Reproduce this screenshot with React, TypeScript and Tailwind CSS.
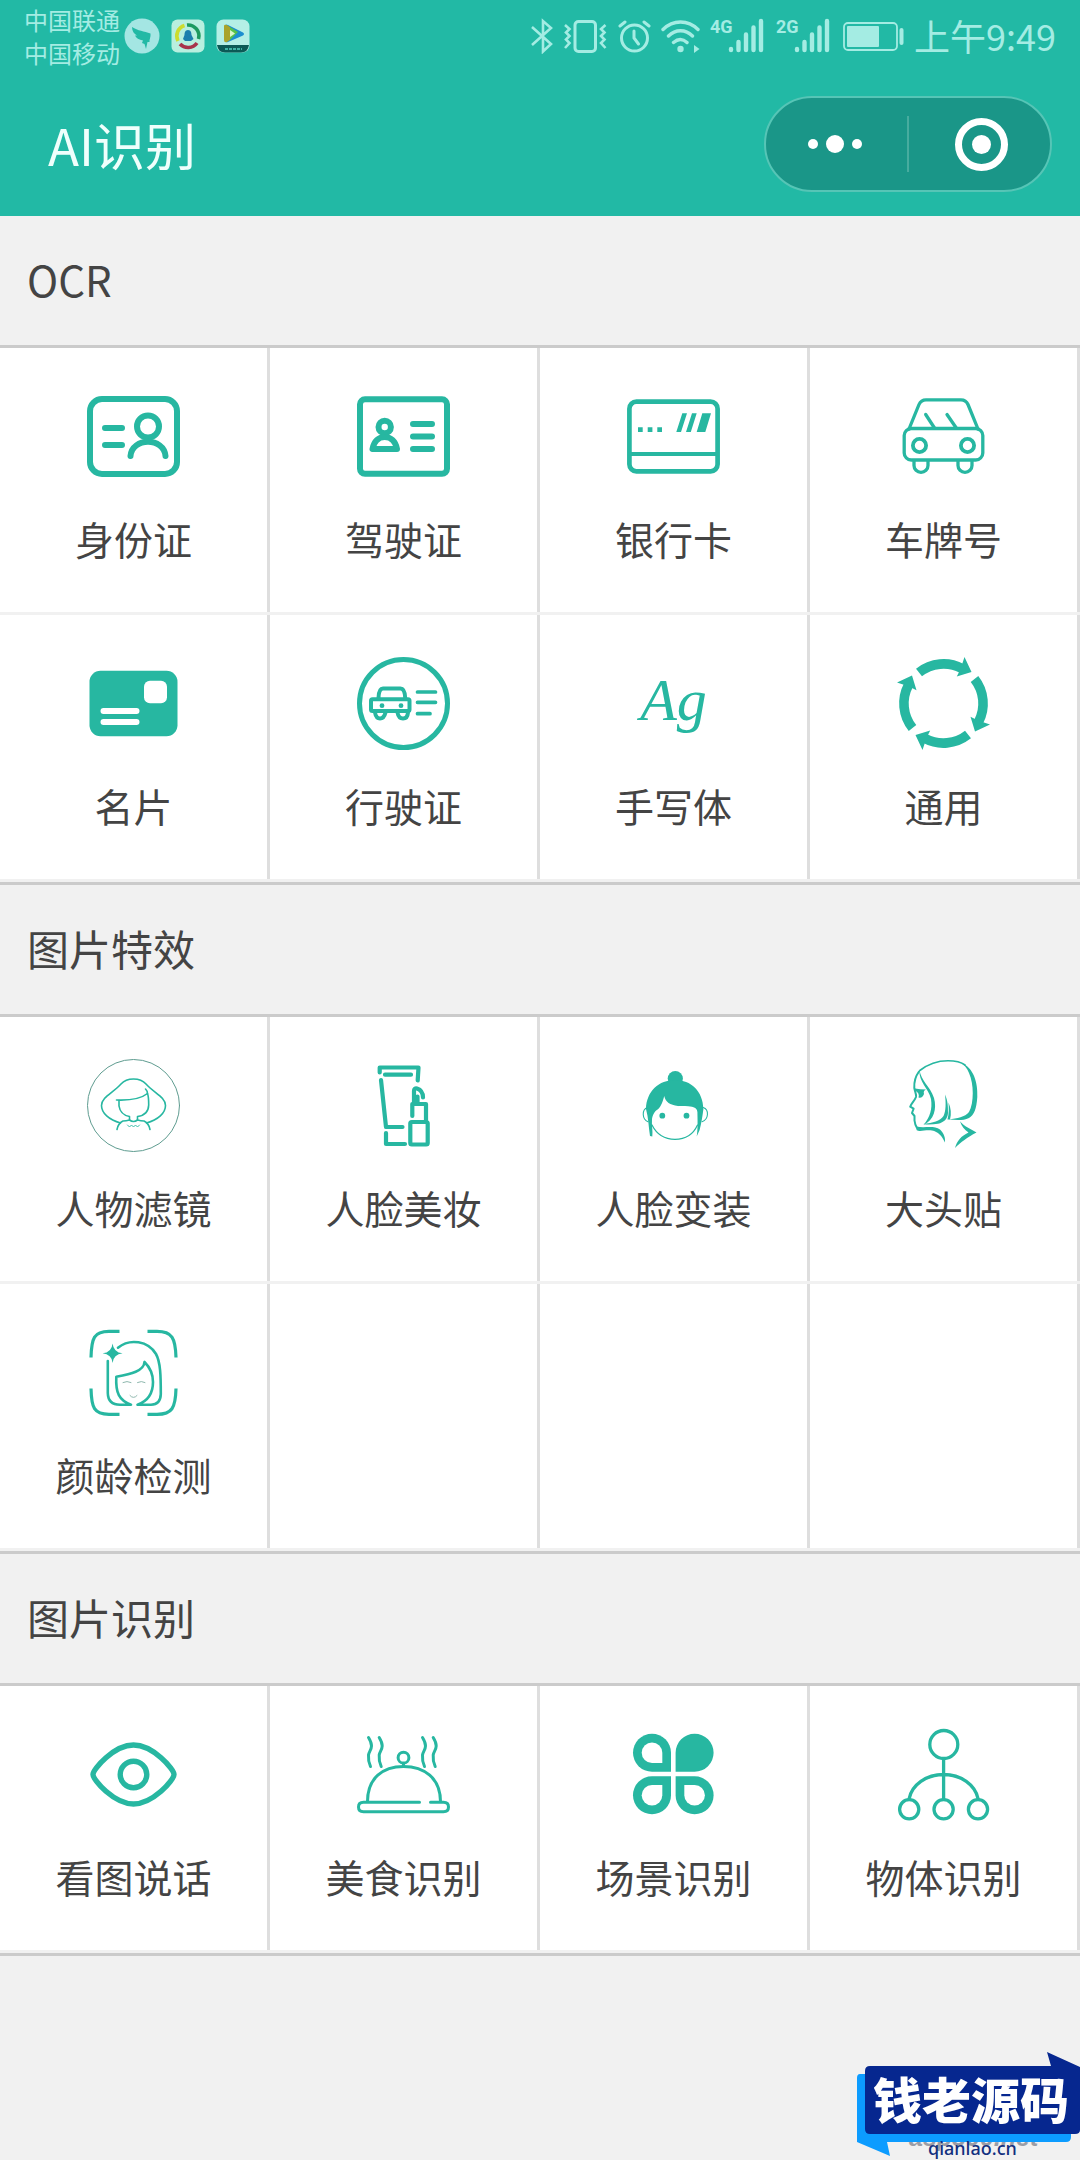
import React from 'react'

type Item = { label: string; icon: React.ReactNode }
type Section = { title: string; items: Item[] }

function Icon({ children }: { children: React.ReactNode }) {
  return (
    <svg
      viewBox="0 0 93 93"
      className="h-[93px] w-[93px] text-[#27b7a1]"
      fill="none"
      stroke="currentColor"
      strokeLinecap="round"
      strokeLinejoin="round"
      aria-hidden="true"
    >
      {children}
    </svg>
  )
}

/* OCR */

const IdCardIcon = () => (
  <Icon>
    <g strokeWidth="6">
      <rect x="3" y="9" width="87" height="75" rx="12" />
      <path d="M18 38H35M18 55H35" />
      <circle cx="61" cy="36.5" r="11" />
      <path d="M43.5 66C45 47 77 47 78.5 66" />
    </g>
  </Icon>
)

const DriverLicenseIcon = () => (
  <Icon>
    <g strokeWidth="6">
      <rect x="3" y="9.3" width="87" height="74.5" rx="5" />
      <circle cx="27.7" cy="37" r="6.2" />
      <path d="M15.5 59H40C38.5 51 33.5 47 27.7 47S17 51 15.5 59Z" />
      <path d="M56 34H75M56 46.5H75M56 59H75" />
    </g>
  </Icon>
)

const BankCardIcon = () => (
  <Icon>
    <rect x="2.4" y="11.7" width="88.2" height="69.6" rx="7" strokeWidth="4.7" />
    <path d="M3 64H90" strokeWidth="4" />
    <g fill="currentColor" stroke="none">
      <path d="M11 37.3h4.7v4.7h-4.7zM20.7 37.3h4.7v4.7h-4.7zM30.3 37.3h4.7v4.7h-4.7z" />
      <path d="M55.3 23.3H60L54 42H49.3zM65 23.3H69.7L63.8 42H59zM75.3 23.3H84L78.3 42H69.7z" />
    </g>
  </Icon>
)

const CarIcon = () => (
  <Icon>
    <g strokeWidth="3.3">
      <rect x="7.2" y="38.5" width="78.6" height="31.5" rx="7" />
      <path d="M12 39L22 14.5Q24 9.8 29 9.8H64Q69 9.8 71 14.5L81 39" />
      <path d="M28.7 24.5L37.5 38M50 24.5L59.3 38" />
      <circle cx="22.5" cy="55.5" r="6.6" strokeWidth="3.8" />
      <circle cx="70.5" cy="55.5" r="6.6" strokeWidth="3.8" />
      <path d="M17 71V75.5A7 6.8 0 0 0 31 75.5V71M61 71V75.5A7 6.8 0 0 0 75 75.5V71" />
    </g>
  </Icon>
)

const BusinessCardIcon = () => (
  <Icon>
    <rect x="2.5" y="13.7" width="88" height="65.6" rx="11" fill="currentColor" stroke="none" />
    <rect x="57" y="23.7" width="23" height="22.6" rx="6" fill="#fff" stroke="none" />
    <path d="M16.5 54H49.5M16.5 65H49.5" stroke="#fff" strokeWidth="6" />
  </Icon>
)

const VehicleLicenseIcon = () => (
  <Icon>
    <circle cx="46.5" cy="46.5" r="44" strokeWidth="5" />
    <g strokeWidth="4">
      <rect x="14" y="42.3" width="38.5" height="11.7" rx="1.5" />
      <path d="M21.5 41Q21.8 31.5 26 31.5H43.5Q47.8 31.5 48.2 41" />
      <path d="M18 55.5Q19 61.5 23 61.5T28.5 55.5M40.5 55.5Q41.5 61.5 46 61.5T51 55.5" />
      <path d="M60.5 35H78.5M60.5 45.3H78.5M60.5 56.7H73" strokeWidth="3.7" />
    </g>
    <circle cx="25" cy="48.7" r="2.4" fill="currentColor" stroke="none" />
    <circle cx="44" cy="48.7" r="2.4" fill="currentColor" stroke="none" />
  </Icon>
)

const HandwritingIcon = () => (
  <span className="flex h-[93px] w-[93px] items-center justify-center pb-2 font-['Liberation_Serif',serif] text-[60px] leading-none text-[#27b7a1] italic">
    Ag
  </span>
)

const GeneralIcon = () => (
  <Icon>
    {[0, 90, 180, 270].map((deg) => (
      <g key={deg} transform={`rotate(${deg} 46.5 46.5)`}>
        <path d="M22 15.5A39.5 39.5 0 0 1 65 11.5" strokeWidth="9.6" strokeLinecap="butt" />
        <path d="M67.5 0L74.5 15L59.8 19.5L63.5 12Z" fill="currentColor" stroke="none" />
      </g>
    ))}
  </Icon>
)

/* Photo effects */

const PortraitFilterIcon = () => (
  <Icon>
    <circle cx="46.5" cy="46.5" r="46" strokeWidth="1" stroke="#5f9c90" />
    <g strokeWidth="1.6">
      <path d="M33.5 64C22 61 14.5 54 14.5 46.5C14.5 38 26 34 34 25C38 20.5 42 20 46.5 20S55 20.5 59 25C67 34 78.5 38 78.5 46.5C78.5 54 71 61 59.5 64" />
      <path d="M29.5 41C42 41.5 53 40.5 60.5 34.5C60.5 32.5 59.5 31 58.5 30" />
      <path d="M60.5 34.5C61.5 37 61.7 40 61.7 46C61.5 53 57.5 56.5 50.5 57.5V61Q54 62 57 62Q62 64.5 63 70.5" />
      <path d="M32 41.5V47C33 53.5 37 56.5 42.5 57.5V61Q39 62 36 62Q31 64.5 30 70.5" />
      <path d="M42.5 61Q46.5 64 50.5 61" />
      <path d="M40.5 66L42.5 68L44.5 66L46.5 68L48.5 66L50.5 68L52.5 66" strokeWidth="0.9" />
    </g>
  </Icon>
)

const MakeupIcon = () => (
  <Icon>
    <g strokeWidth="4.2">
      <path d="M22.7 13.5V8.5H61.5L60.7 21.5M28 15.7H54" />
      <path d="M24 21L29 68H45.5M29 74V85H48" />
      <rect x="53.3" y="63" width="17.4" height="22.5" rx="1.5" />
      <path d="M55.3 57V45H69V61" />
      <path d="M57 44V32Q57 29 60 29.5Q66 31.5 66 38.5M60.5 37.5V44" />
    </g>
  </Icon>
)

const DressUpIcon = () => (
  <Icon>
    <g fill="currentColor" stroke="none">
      <circle cx="48.3" cy="19.5" r="7.6" />
      <path d="M19 50C19.5 32 32 21 48 21S76 32 76.4 50C75.5 57 74.5 64 72.6 71L69.7 77.5C71 70 70.5 60 70.4 53Q70 48.5 65 47.7C60 47 55 47.5 51 47C43 46 38.5 43 37.2 37C36 42 34 47.5 31.5 49.7C28 52 26 54.5 25 60C24.5 66 26 72 25.3 77.5L23 77C21.5 68 21.5 59 19 50Z" />
      <circle cx="35.3" cy="56.7" r="2.9" />
      <circle cx="59.5" cy="56.7" r="2.9" />
    </g>
    <path d="M25 66C30 76 39 80.3 48 80.3S66 76 70.5 66" strokeWidth="1.2" />
    <path d="M20.5 48.5C14.5 50.5 15 60.5 21 62.7M76.2 48.5C82.3 50.5 81.8 60.5 75 62.7" strokeWidth="1.1" />
  </Icon>
)

const StickerIcon = () => (
  <Icon>
    <path d="M22.8 11.5C31 5 41 1.7 51 1.7C58 1.7 64 3 68 6" strokeWidth="1.6" />
    <g fill="currentColor" stroke="none">
      <path d="M64 3.5C77 9 81 24 80.3 38C79.5 50 77 56 72 59C66 62 58 61 52 60.5C60 59.5 68 58 72 53C77 44 77 25 72 14C70 9 67 6 64 3.5Z" />
      <path d="M22.5 11C24 22 33 27 37 39C40 50 37 61 26.5 66C33 58 35.5 50 34 40C31.5 29 21.5 23 22.5 11Z" />
      <path d="M26.3 65C36 64 43 62 46.5 57C49 52 49 44 48 35.5C51 42 51 48 51 54C50.5 60 47 63.5 41 64.7C36 65.5 31 66 26.3 65Z" />
      <path d="M51.5 43.5C54 49 54.5 55 53 60.5L50.5 60.5C52 55 52 49 51.5 43.5Z" />
      <path d="M18 29.5Q23 30.5 29 30.5Q26 31.5 27 35Q25.5 39.5 21.5 38.5Q23 34 18 31.5Z" />
      <path d="M19.5 67.5C27 69.5 37 66 43 70.5C47 74 48.5 79 48 83.5C45 77 41 72.5 35 71.5C28 70.5 23 73.5 19.5 71Z" />
      <path d="M63 62.3C67 67.5 74 70 79.5 73.5C70 78.5 64 83 58 89C60 82 64 77 71.5 73.5C67.5 70.5 64.5 67.5 63 62.3Z" />
    </g>
    <path d="M22 12.5C18 18 17 24 17.3 29C18 33 19.5 35 19 38C17.5 42 14 44.5 13.2 47.7L16.6 49.7L15 54L17.5 57V61.5Q18 66 20 69" strokeWidth="2" />
  </Icon>
)

const FaceAgeIcon = () => (
  <Icon>
    <path
      d="M4 31.5C4.5 12 7 5.3 22 5.3H32.5M60.5 5.3H70C85 5.3 88.5 12 89 31.5M89 62.5C88.5 82 85 88.3 70 88.3H60.5M32.5 88.3H22C7 88.3 4.5 82 4 62.5"
      strokeWidth="3.2"
      strokeLinecap="butt"
    />
    <path d="M25.6 17.5Q26.5 26.5 35.6 27.3Q26.5 28.2 25.6 37Q24.7 28.2 15.6 27.3Q24.7 26.5 25.6 17.5Z" fill="currentColor" stroke="none" />
    <path
      d="M31 21.7C43 12 61 15 69 28C73.5 36 73.8 50 73.8 68Q73.5 78.7 64 78.7H50.5C61 75 66 68 66 56C66 47 62.5 41 57.5 36C57 45 44 48 29.3 50.7C28.5 67 32 74 44 78.7H33Q21 78.7 20.8 67V35"
      strokeWidth="2.6"
    />
    <path d="M36 56.5Q40 54.5 44 56.5M50.5 56.5Q54.5 54.5 58 56.5M43 69.5Q46.5 73.5 50 69.5" strokeWidth="1" stroke="#8fb8ae" />
  </Icon>
)

/* Photo recognition */

const EyeIcon = () => (
  <Icon>
    <g strokeWidth="5.4">
      <path d="M6 46.5C6 41 27 17 46.5 17S87 41 87 46.5S66 76 46.5 76S6 52 6 46.5Z" />
      <circle cx="46.5" cy="46.5" r="13.3" />
    </g>
  </Icon>
)

const FoodIcon = () => (
  <Icon>
    <g strokeWidth="3">
      <path d="M10.5 73.5C10.5 50 26 38.5 46.5 38.5S83.5 50 83.5 73.5" />
      <circle cx="46.5" cy="29.7" r="5.4" />
      <path d="M46.5 35.5V38.5M62.5 74.3H6.500Q1.500 74.3 1.500 79T6.500 83.700H86.500Q91.500 83.700 91.500 79T86.500 74.300H73.500" />
      <path d="M11.5 9.5C18 20 12 22 11.5 27C11 32 12 35 13.5 38.5" />
      <path d="M22.2 9.5C28.7 20 22.7 22 22.2 27C21.7 32 22.7 35 24.2 38.5" />
      <path d="M65.5 9.5C72 20 66 22 65.5 27C65 32 66 35 67.5 38.5" />
      <path d="M76.2 9.5C82.7 20 76.7 22 76.2 27C75.7 32 76.7 35 78.2 38.5" />
    </g>
  </Icon>
)

const SceneIcon = () => (
  <Icon>
    <g fill="currentColor" stroke="none">
      <path d="M44 43.7H25A19 19 0 1 1 44 24.7Z" />
      <path d="M48.6 43.7V24.7A19 19 0 1 1 67.6 43.7Z" />
      <path d="M44 48.3V67.3A19 19 0 1 1 25 48.3Z" />
      <path d="M48.6 48.3H67.6A19 19 0 1 1 48.6 67.3Z" />
    </g>
    <g fill="#fff" stroke="none">
      <path d="M35.3 35H25A10.3 10.3 0 1 1 35.3 24.7Z" />
      <path d="M35.3 57V67.3A10.3 10.3 0 1 1 25 57Z" />
      <path d="M57.3 57H67.6A10.3 10.3 0 1 1 57.3 67.3Z" />
    </g>
  </Icon>
)

const ObjectIcon = () => (
  <Icon>
    <g strokeWidth="3.3">
      <circle cx="46.8" cy="16.5" r="14" />
      <path d="M46.6 31V71M12.2 70.5C15 57 29 46.5 46.6 46.5S78 57 81 70.5" />
      <circle cx="12.2" cy="81.3" r="9.6" />
      <circle cx="46.6" cy="81.3" r="9.6" />
      <circle cx="81" cy="81.3" r="9.6" />
    </g>
  </Icon>
)

const sections: Section[] = [
  {
    title: 'OCR',
    items: [
      { label: '身份证', icon: <IdCardIcon /> },
      { label: '驾驶证', icon: <DriverLicenseIcon /> },
      { label: '银行卡', icon: <BankCardIcon /> },
      { label: '车牌号', icon: <CarIcon /> },
      { label: '名片', icon: <BusinessCardIcon /> },
      { label: '行驶证', icon: <VehicleLicenseIcon /> },
      { label: '手写体', icon: <HandwritingIcon /> },
      { label: '通用', icon: <GeneralIcon /> },
    ],
  },
  {
    title: '图片特效',
    items: [
      { label: '人物滤镜', icon: <PortraitFilterIcon /> },
      { label: '人脸美妆', icon: <MakeupIcon /> },
      { label: '人脸变装', icon: <DressUpIcon /> },
      { label: '大头贴', icon: <StickerIcon /> },
      { label: '颜龄检测', icon: <FaceAgeIcon /> },
    ],
  },
  {
    title: '图片识别',
    items: [
      { label: '看图说话', icon: <EyeIcon /> },
      { label: '美食识别', icon: <FoodIcon /> },
      { label: '场景识别', icon: <SceneIcon /> },
      { label: '物体识别', icon: <ObjectIcon /> },
    ],
  },
]

function Signal({ type }: { type: string }) {
  return (
    <span className="flex h-9 w-14 items-start">
      <span className="w-[18px] font-['Liberation_Sans_Narrow','Roboto',sans-serif] text-[18px] leading-[18px] font-bold">
        {type}
      </span>
      <svg viewBox="0 0 36 36" className="h-9 w-9" stroke="currentColor" strokeWidth="4.4" strokeLinecap="round" aria-hidden="true">
        <path d="M3 31V32M10.5 24V32M18 16.5V32M25.5 9.5V32M33 3V32" />
      </svg>
    </span>
  )
}

function StatusBar() {
  return (
    <div className="flex h-[72px] items-center justify-between px-6 text-[#a4ece3]">
      <div className="flex items-center">
        <div className="mr-1 text-[24px] leading-[33px]">
          <p>中国联通</p>
          <p>中国移动</p>
        </div>
        <div className="flex items-center gap-[11px]">
          <svg viewBox="0 0 36 36" className="h-9 w-9" aria-hidden="true">
            <circle cx="18" cy="18" r="17.5" fill="#a4e6e3" />
            <path d="M8 9C14 13 20 13 26.5 15.5C27 19 25 22 25.500 24H23.500L22 31L20.500 26L18 25L19 22.500C15 22 12 20 11 17.500H13C10 16 8 13 8 9Z" fill="#22b9a5" />
          </svg>
          <svg viewBox="0 0 34 34" className="h-[34px] w-[34px]" aria-hidden="true">
            <rect x="0.5" y="0.5" width="33" height="33" rx="6" fill="#b8efdf" />
            <g fill="none" strokeWidth="3.6">
              <path d="M7 22A11 11 0 0 1 13.5 6.500" stroke="#cddc2e" />
              <path d="M16 6A11 11 0 0 1 27.500 20" stroke="#1c9a5f" />
              <path d="M26 24A11 11 0 0 1 9 25" stroke="#a8324a" />
            </g>
            <path d="M17 11C20 11 20.5 14 20.5 16L22.5 20L20 22H14L12 20L13.5 16C13.5 14 14 11 17 11Z" fill="#1b7fae" />
          </svg>
          <svg viewBox="0 0 34 34" className="h-[34px] w-[34px]" aria-hidden="true">
            <rect x="0.5" y="0.5" width="33" height="33" rx="7" fill="#b4efe6" />
            <path d="M1 26H33Q32 33.5 25 33.5H9Q2 33.5 1 26Z" fill="#0b5a56" />
            <path d="M9 7Q9 4.5 12 6L27 13.5Q29 15 27 16.5L12 23Q9 24 9 21Z" fill="#1c8fd0" />
            <path d="M8 7Q8 5 11 6L14 8V21L11 23Q8 24 8 21Z" fill="#a9a32c" />
            <path d="M14 8L22 13L14 21Z" fill="#57c14b" />
            <path d="M14 11L19 14.5L14 18Z" fill="#d9f7c9" />
            <path d="M9 30H26" stroke="#3fb3a5" strokeWidth="2" strokeDasharray="3 1" />
          </svg>
        </div>
      </div>
      <div className="flex items-center gap-[10px]">
        <svg viewBox="0 0 23 36" className="h-9 w-[23px]" fill="none" stroke="currentColor" strokeWidth="2.6" aria-hidden="true">
          <path d="M1 9L20 26L12 33.5V3L20 10L1 27" />
        </svg>
        <svg viewBox="0 0 44 36" className="h-9 w-11" fill="none" stroke="currentColor" strokeWidth="3" aria-hidden="true">
          <rect x="11" y="3.5" width="20.5" height="30" rx="3.5" />
          <path d="M1 7L5.5 11L2 14.5L5.5 18L2 21.5L5.5 25L1 30M41.5 7L37 11L40.5 14.5L37 18L40.5 21.5L37 25L41.5 30" strokeWidth="2.6" />
        </svg>
        <svg viewBox="0 0 33 36" className="h-9 w-[33px]" fill="none" stroke="currentColor" strokeWidth="3" strokeLinecap="round" aria-hidden="true">
          <circle cx="16.5" cy="20" r="13" />
          <path d="M2 8L7 4M31 8L26 4M16 13V20L20.5 26" />
        </svg>
        <svg viewBox="0 0 39 36" className="h-9 w-[39px]" fill="none" stroke="currentColor" strokeWidth="3.4" strokeLinecap="round" aria-hidden="true">
          <path d="M2 11.5C12 1.5 27 1.5 37 11.5M7.5 18C14.5 11 24.5 11 31.5 18M12.5 24.5Q19.5 18.5 26 24.5" />
          <circle cx="19.5" cy="31" r="3.2" fill="currentColor" stroke="none" />
          <path d="M33 27L38.5 31L33 35Z" fill="currentColor" stroke="none" />
        </svg>
        <Signal type="4G" />
        <Signal type="2G" />
        <svg viewBox="0 0 62 36" className="h-9 w-[62px]" aria-hidden="true">
          <rect x="2" y="5" width="53" height="27" rx="4" fill="none" stroke="currentColor" strokeWidth="1.8" />
          <rect x="5" y="8" width="32" height="21" rx="1" fill="currentColor" />
          <rect x="57.5" y="10" width="4" height="17" rx="2" fill="currentColor" />
        </svg>
        <time className="pb-[2px] text-[36px] leading-9">上午9:49</time>
      </div>
    </div>
  )
}

function TitleBar() {
  return (
    <div className="flex h-36 items-center justify-between pr-7 pl-12">
      <h1 className="text-[51px] leading-none text-[#effffc]">AI识别</h1>
      <div className="flex h-24 w-72 items-center rounded-full border-2 border-[#56c5b6] bg-[#1a9688]">
        <button type="button" aria-label="更多" className="flex h-full flex-1 items-center justify-center gap-2 pr-1">
          <span className="h-[10px] w-[10px] rounded-full bg-white" />
          <span className="h-[18px] w-[18px] rounded-full bg-white" />
          <span className="h-[10px] w-[10px] rounded-full bg-white" />
        </button>
        <span className="h-14 w-[2px] bg-[#47ac9f]" />
        <button type="button" aria-label="关闭" className="flex h-full flex-1 items-center justify-center pl-1">
          <span className="flex h-[53px] w-[53px] items-center justify-center rounded-full border-[7px] border-white">
            <span className="h-[19px] w-[19px] rounded-full bg-white" />
          </span>
        </button>
      </div>
    </div>
  )
}

function SectionGrid({ title, items }: Section) {
  const empty = (4 - (items.length % 4)) % 4

  return (
    <section className="border-b-[3px] border-[#cbcbcb]">
      <h2 className="flex h-[132px] items-center border-b-[3px] border-[#cbcbcb] px-[27px] pb-[3px] text-[42px] leading-none">
        {title}
      </h2>
      <div className="grid grid-cols-4 bg-[#f1f1f1]">
        {items.map((item) => (
          <div key={item.label} className="border-b-[3px] border-[#f1f1f1]">
            <a
              href="#"
              className="flex h-[264px] flex-col items-center border-r-[3px] border-[#dedede] bg-white pt-[42px]"
            >
              {item.icon}
              <span className="mt-[25px] text-[39px] leading-[60px] whitespace-nowrap">{item.label}</span>
            </a>
          </div>
        ))}
        {Array.from({ length: empty }, (_, i) => (
          <div key={i} className="border-b-[3px] border-[#f1f1f1]">
            <div className="h-[264px] border-r-[3px] border-[#dedede] bg-white" />
          </div>
        ))}
      </div>
    </section>
  )
}

function Watermark() {
  return (
    <svg viewBox="0 0 230 110" className="absolute right-0 bottom-0 h-[110px] w-[230px]">
      <text x="59" y="96" className="fill-[#9a9da6] font-['Liberation_Sans',sans-serif] text-[25px] font-bold italic">
        asp300.net
      </text>
      <path d="M10 24H215L221 32V87Q221 92 216 92H37L40 106L7 92V28Q7 24 10 24Z" fill="#0c9cff" />
      <path d="M197 2L230 17V80Q230 84 225 84H20Q15 84 15 79V21Q15 16 20 16H201Z" fill="#06278f" />
      <text x="23" y="69" className="fill-white font-['Noto_Sans_CJK_SC',sans-serif] text-[49px] font-black">
        钱老源码
      </text>
      <text x="78" y="105" className="fill-[#12307f] font-['Noto_Sans',sans-serif] text-[18px] font-medium">
        qianlao.cn
      </text>
    </svg>
  )
}

export default function App() {
  return (
    <div className="relative min-h-screen bg-[#f1f1f1] font-['Noto_Sans_CJK_SC',sans-serif] text-[#444]">
      <header className="bg-[#22b9a5]">
        <StatusBar />
        <TitleBar />
      </header>
      <main>
        {sections.map((section) => (
          <SectionGrid key={section.title} {...section} />
        ))}
      </main>
      <Watermark />
    </div>
  )
}
